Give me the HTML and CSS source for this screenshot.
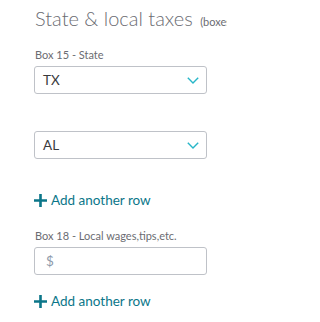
FILE: index.html
```html
<!DOCTYPE html>
<html>
<head>
<meta charset="utf-8">
<link rel="stylesheet" href="styles.css">
</head>
<body>
<div class="page">
  <h1 class="title">State &amp; local taxes <span class="sub">(boxes 15-20)</span></h1>

  <div class="field first">
    <div class="label">Box 15 - State</div>
    <div class="select">
      <span class="value">TX</span>
      <svg class="chev" width="12" height="7" viewBox="0 0 12 7"><path d="M0.8 0.8 L6 6 L11.2 0.8" fill="none" stroke="#27b6c8" stroke-width="1.4"/></svg>
    </div>
  </div>

  <div class="field second">
    <div class="select">
      <span class="value">AL</span>
      <svg class="chev" width="12" height="7" viewBox="0 0 12 7"><path d="M0.8 0.8 L6 6 L11.2 0.8" fill="none" stroke="#27b6c8" stroke-width="1.4"/></svg>
    </div>
  </div>

  <a class="add add1" href="#">
    <svg class="plus" width="13" height="13" viewBox="0 0 13 13"><path d="M6.5 0 V13 M0 6.5 H13" stroke="#0b7689" stroke-width="2.6"/></svg>
    <span>Add another row</span>
  </a>

  <div class="field third">
    <div class="label">Box 18 - Local wages,tips,etc.</div>
    <div class="input"><span class="dollar">$</span></div>
  </div>

  <a class="add add2" href="#">
    <svg class="plus" width="13" height="13" viewBox="0 0 13 13"><path d="M6.5 0 V13 M0 6.5 H13" stroke="#0b7689" stroke-width="2.6"/></svg>
    <span>Add another row</span>
  </a>
</div>
</body>
</html>
```

FILE: styles.css
```css
html, body {
  margin: 0;
  padding: 0;
  overflow: hidden;
  background: #ffffff;
}
.page {
  box-sizing: border-box;
  width: 227px;
  height: 322px;
  overflow: hidden;
  padding: 6px 20px 0 34px;
  font-family: "Lato", "Open Sans", sans-serif;
  display: flex;
  flex-direction: column;
  align-items: flex-start;
}
.title {
  margin: 0 -20px 0 1px;
  font-size: 20px;
  line-height: 24px;
  font-weight: 300;
  color: #6b6c72;
  white-space: nowrap;
  overflow: hidden;
  align-self: stretch;
}
.sub {
  font-size: 11px;
  font-weight: 400;
  margin-left: 2px;
}
.field {
  display: flex;
  flex-direction: column;
}
.first { margin-top: 14px; }
.second { margin-top: 37px; }
.third { margin-top: 20px; }
.label {
  font-size: 11px;
  line-height: 14px;
  color: #6b6c72;
  margin: 0 0 4px 1px;
}
.select, .input {
  box-sizing: border-box;
  width: 173px;
  height: 28px;
  border: 1px solid #bfc2c8;
  border-radius: 3px;
  display: flex;
  align-items: center;
  justify-content: space-between;
  padding: 0 7px 0 8px;
}
.value {
  font-size: 13.5px;
  color: #393a3d;
}
.chev { display: block; margin-top: 1px; }
.dollar {
  font-size: 13.5px;
  color: #8d9aab;
  margin-left: 3px;
}
.add {
  display: flex;
  align-items: center;
  gap: 4px;
  text-decoration: none;
  color: #0b7689;
  font-size: 13.5px;
  line-height: 18px;
}
.add1 { margin-top: 32px; }
.add2 { margin-top: 17px; }
.plus { display: block; }
```
